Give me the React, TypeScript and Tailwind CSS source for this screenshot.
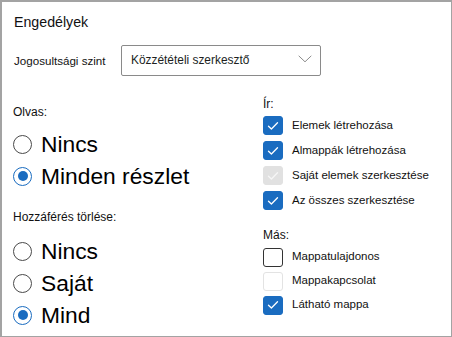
import { ReactNode } from 'react';

const font = { fontFamily: '"Liberation Sans", Arial, sans-serif' };

function Radio({ checked, label }: { checked?: boolean; label: string }) {
  return (
    <div className="flex h-[32px] items-center">
      <span
        className={`flex h-[19px] w-[19px] items-center justify-center rounded-full border bg-white ${
          checked ? 'border-[#1a6cc0]' : 'border-[#4a4a4a]'
        }`}
      >
        {checked && <span className="h-[10px] w-[10px] rounded-full bg-[#1a6cc0]" />}
      </span>
      <span className="ml-[9px] text-[22.8px] leading-none text-black">{label}</span>
    </div>
  );
}

type BoxState = 'on' | 'off' | 'disabledOn' | 'disabledOff';

function Check({ state, label, h = 'h-[25px]' }: { state: BoxState; label: string; h?: string }) {
  const box: Record<BoxState, string> = {
    on: 'bg-[#1a6cc0] border-[#1a6cc0]',
    off: 'bg-white border-[#333333]',
    disabledOn: 'bg-[#e1e1e1] border-[#e1e1e1]',
    disabledOff: 'bg-white border-[#e3e3e3]',
  };
  const showCheck = state === 'on' || state === 'disabledOn';
  return (
    <div className={`flex ${h} items-center`}>
      <span
        className={`flex h-[19px] w-[20px] items-center justify-center rounded-[3px] border ${box[state]}`}
      >
        {showCheck && (
          <svg width="12" height="10" viewBox="0 0 12 10" fill="none">
            <path
              d="M1.5 5.2 L4.4 8 L10.5 1.8"
              stroke={state === 'on' ? '#ffffff' : '#f6f6f6'}
              strokeWidth="1.3"
              strokeLinecap="round"
              strokeLinejoin="round"
            />
          </svg>
        )}
      </span>
      <span className="ml-[9px] text-[11.5px] leading-none text-[#111]">{label}</span>
    </div>
  );
}

function Label({ children, h }: { children: ReactNode; h: string }) {
  return <div className={`flex ${h} items-center text-[12px] leading-none text-[#111]`}>{children}</div>;
}

export default function App() {
  return (
    <div
      className="h-[337px] w-[452px] overflow-hidden border border-t-2 border-l-2 border-[#a3a3a3] bg-white"
      style={font}
    >
      <div className="pl-[12px] pt-[10px]">
        <div className="flex h-[20px] items-center text-[14.2px] leading-none text-[#111]">Engedélyek</div>
      </div>

      <div className="mt-[13px] flex items-center pl-[12px]">
        <div className="w-[107px] text-[11.6px] leading-none text-[#111]">Jogosultsági szint</div>
        <div className="flex h-[31px] w-[200px] items-center justify-between rounded-[2px] border border-[#8a8a8a] pl-[9px] pr-[8px]">
          <span className="text-[11.9px] leading-none text-[#201f1e]">Közzétételi szerkesztő</span>
          <svg width="14" height="8" viewBox="0 0 14 8" fill="none" className="mb-[4px]">
            <path d="M0.7 0.8 L7 6.8 L13.3 0.8" stroke="#8c8c8c" strokeWidth="1" />
          </svg>
        </div>
      </div>

      <div className="grid grid-cols-[250px_1fr] pl-[11px]">
        <div className="pt-[21px]">
          <Label h="h-[30px]">Olvas:</Label>
          <div className="mt-[1px]">
            <Radio label="Nincs" />
            <Radio checked label="Minden részlet" />
          </div>
          <div className="mt-[10px]">
            <Label h="h-[30px]">Hozzáférés törlése:</Label>
          </div>
          <div className="mt-[3px]">
            <Radio label="Nincs" />
            <Radio label="Saját" />
            <Radio checked label="Mind" />
          </div>
        </div>

        <div className="pt-[19px]">
          <Label h="h-[18px]">Ír:</Label>
          <Check state="on" label="Elemek létrehozása" />
          <Check state="on" label="Almappák létrehozása" />
          <Check state="disabledOn" label="Saját elemek szerkesztése" />
          <Check state="on" label="Az összes szerkesztése" />
          <div className="mt-[12px]">
            <Label h="h-[20px]">Más:</Label>
          </div>
          <Check state="off" label="Mappatulajdonos" h="h-[24px]" />
          <Check state="disabledOff" label="Mappakapcsolat" h="h-[24px]" />
          <Check state="on" label="Látható mappa" h="h-[24px]" />
        </div>
      </div>
    </div>
  );
}
